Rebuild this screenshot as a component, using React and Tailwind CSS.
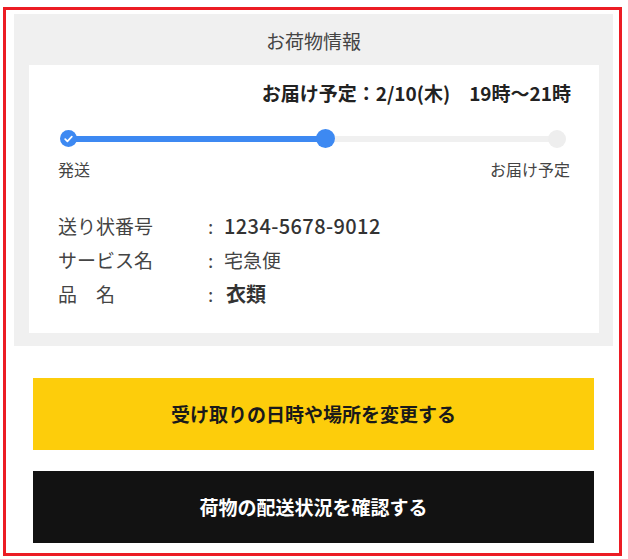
import React from "react";

const font = { fontFamily: '"Noto Sans CJK JP", "Noto Sans", sans-serif' };

function InfoRow({ label, value, valueClass }) {
  return (
    <div className="flex items-center h-[34px] leading-[34px]">
      <div className="w-[148px] text-[19px] text-[#444]">{label}</div>
      <div className="w-[18px] pl-[2px] text-[19px] text-[#444]">:</div>
      <div className={valueClass}>{value}</div>
    </div>
  );
}

export default function App() {
  return (
    <div
      className="w-[628px] h-[559px] bg-white pt-[7px] pl-[3px]"
      style={font}
    >
      <div className="w-[619px] h-[549px] border-[3px] border-[#ec1c24] pt-[4px]">
        <div className="ml-[8px] w-[599px] h-[332px] bg-[#f0f0f0] flex flex-col">
          <div className="h-[51px] flex items-center justify-center text-[19px] text-[#444] pt-[3px]">
            お荷物情報
          </div>
          <div className="ml-[15px] w-[570px] h-[268px] bg-white flex flex-col">
            <div className="pt-[14px] pr-[28px] text-right text-[19px] leading-[28px] font-bold text-[#222]">
              お届け予定：2/10(木)　19時～21時
            </div>
            <div className="mt-[22px] pl-[31px] h-[19px] flex items-center">
              <div className="relative z-10 w-[17px] h-[17px] rounded-full bg-[#3d89f2] flex items-center justify-center">
                <svg width="9" height="8" viewBox="0 0 9 8" fill="none">
                  <path
                    d="M1.2 4.2 L3.4 6.3 L7.8 1.6"
                    stroke="white"
                    strokeWidth="1.7"
                    strokeLinecap="round"
                    strokeLinejoin="round"
                  />
                </svg>
              </div>
              <div className="w-[245px] h-[6px] bg-[#3d89f2] -mx-[3px]" />
              <div className="relative z-10 w-[19px] h-[19px] rounded-full bg-[#3d89f2]" />
              <div className="w-[219px] h-[6px] bg-[#f0f0f0] -mx-[3px]" />
              <div className="relative z-10 w-[18px] h-[18px] rounded-full bg-[#eeeeee]" />
            </div>
            <div className="mt-[10px] px-[29px] flex justify-between text-[16px] leading-[22px] text-[#444]">
              <span>発送</span>
              <span>お届け予定</span>
            </div>
            <div className="mt-[29px] pl-[29px] flex flex-col">
              <InfoRow
                label="送り状番号"
                value="1234-5678-9012"
                valueClass="text-[20px] font-medium tracking-[0.4px] text-[#333]"
              />
              <InfoRow
                label="サービス名"
                value="宅急便"
                valueClass="text-[19px] text-[#444]"
              />
              <InfoRow
                label="品　名"
                value="衣類"
                valueClass="text-[20px] font-bold text-[#333] pl-[2px]"
              />
            </div>
          </div>
        </div>
        <div className="ml-[27px] w-[561px] mt-[32px] flex flex-col gap-[21px]">
          <div className="h-[72px] bg-[#fdcd0b] flex items-center justify-center text-[19px] font-bold text-[#1a1a1a]">
            受け取りの日時や場所を変更する
          </div>
          <div className="h-[72px] bg-[#121212] flex items-center justify-center text-[19px] font-bold text-white">
            荷物の配送状況を確認する
          </div>
        </div>
      </div>
    </div>
  );
}
